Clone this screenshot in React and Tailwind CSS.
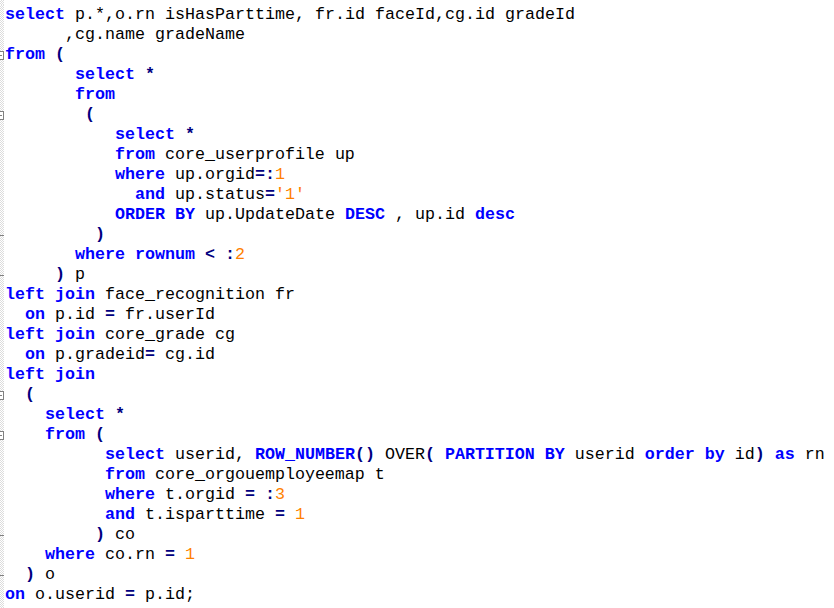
// SQL editor view (Notepad++-style syntax colouring)

const KEYWORDS = new Set([
  "select", "from", "where", "and", "order", "by", "desc", "left", "join",
  "on", "as", "rownum", "row_number", "partition",
]);

// [indent, text, marker]  marker: "box" = fold box, "end" = fold end tick
const LINES = [
  [0, "select p.*,o.rn isHasParttime, fr.id faceId,cg.id gradeId"],
  [6, ",cg.name gradeName"],
  [0, "from (", "box"],
  [7, "select *"],
  [7, "from"],
  [8, "(", "box"],
  [11, "select *"],
  [11, "from core_userprofile up"],
  [11, "where up.orgid=:1"],
  [13, "and up.status='1'"],
  [11, "ORDER BY up.UpdateDate DESC , up.id desc"],
  [9, ")", "end"],
  [7, "where rownum < :2"],
  [5, ") p", "end"],
  [0, "left join face_recognition fr"],
  [2, "on p.id = fr.userId"],
  [0, "left join core_grade cg"],
  [2, "on p.gradeid= cg.id"],
  [0, "left join"],
  [2, "(", "box"],
  [4, "select *"],
  [4, "from (", "box"],
  [10, "select userid, ROW_NUMBER() OVER( PARTITION BY userid order by id) as rn"],
  [10, "from core_orgouemployeemap t"],
  [10, "where t.orgid = :3"],
  [10, "and t.isparttime = 1"],
  [9, ") co", "end"],
  [4, "where co.rn = 1"],
  [2, ") o", "end"],
  [0, "on o.userid = p.id;"],
];

function tokenize(text) {
  const parts = text.match(/'[^']*'|\s+|[A-Za-z_][A-Za-z0-9_]*|\d+|./g) || [];
  return parts.map((t, i) => {
    const prev = parts[i - 1];
    if (KEYWORDS.has(t.toLowerCase())) return { t, c: "font-bold text-[#0000ff]" };
    if (/^\d+$/.test(t) || t.startsWith("'")) return { t, c: "text-[#ff8000]" };
    if (t === "*" && prev === ".") return { t, c: "" };
    if (/^[()*=<:]$/.test(t)) return { t, c: "font-bold text-[#000080]" };
    return { t, c: "" };
  });
}

function Gutter({ marker }) {
  return (
    <div className="w-[4px] h-[20px] shrink-0 overflow-hidden flex items-center bg-[conic-gradient(#dcdcdc_25%,#ffffff_0_50%,#dcdcdc_0_75%,#ffffff_0)] bg-[length:2px_2px]">
      {marker === "box" && (
        <div className="w-[9px] h-[9px] shrink-0 -ml-[5px] border border-[#808080] bg-white flex items-center justify-center">
          <div className="w-[5px] h-px bg-[#808080]" />
        </div>
      )}
      {marker === "end" && <div className="w-[4px] h-px bg-[#808080]" />}
    </div>
  );
}

function CodeLine({ indent, text, marker }) {
  return (
    <div className="flex h-[20px]">
      <Gutter marker={marker} />
      <div className="pl-[1px] whitespace-pre leading-[20px] text-black">
        {" ".repeat(indent)}
        {tokenize(text).map((tok, i) => (
          <span key={i} className={tok.c}>{tok.t}</span>
        ))}
      </div>
    </div>
  );
}

export default function App() {
  return (
    <div className="w-[834px] h-[608px] bg-white overflow-hidden flex flex-col font-['Liberation_Mono',monospace] text-[16.67px]">
      <div className="w-[4px] h-[5px] shrink-0 bg-[conic-gradient(#dcdcdc_25%,#ffffff_0_50%,#dcdcdc_0_75%,#ffffff_0)] bg-[length:2px_2px]" />
      {LINES.map(([indent, text, marker], i) => (
        <CodeLine key={i} indent={indent} text={text} marker={marker} />
      ))}
      <div className="flex-1 w-[4px] bg-[conic-gradient(#dcdcdc_25%,#ffffff_0_50%,#dcdcdc_0_75%,#ffffff_0)] bg-[length:2px_2px]" />
    </div>
  );
}
